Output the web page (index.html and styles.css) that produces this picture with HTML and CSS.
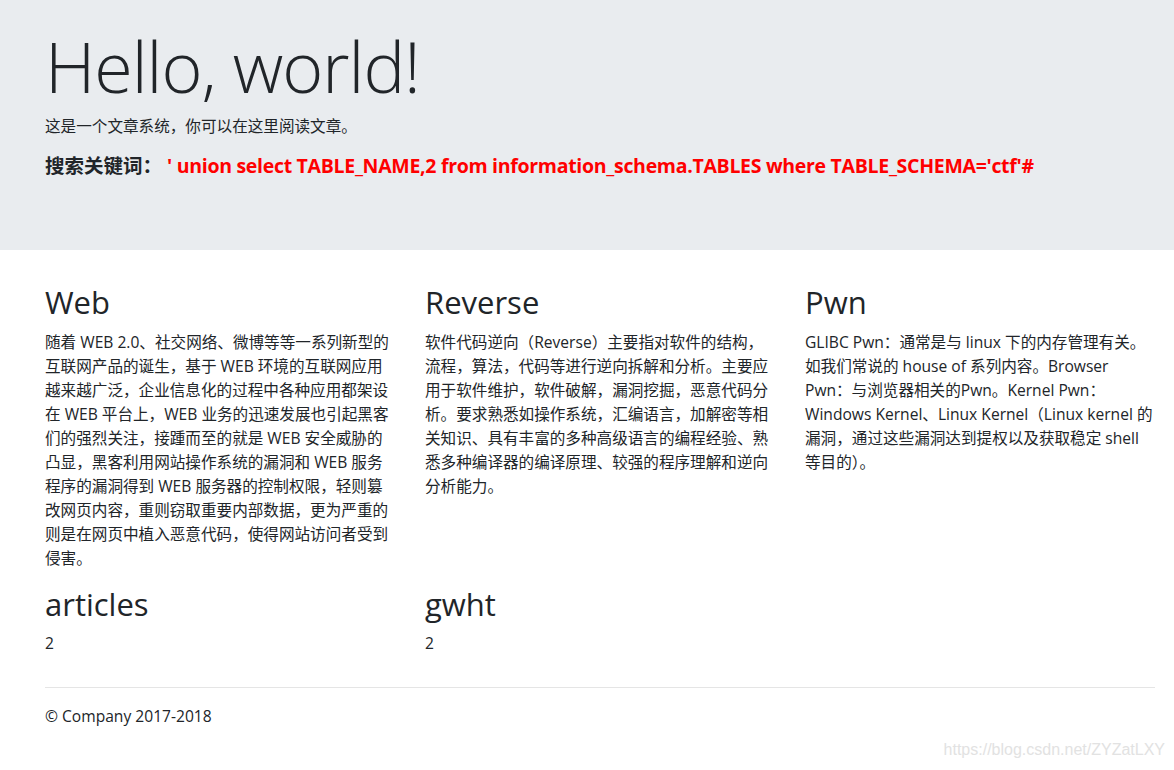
FILE: index.html
```html
<!DOCTYPE html>
<html lang="zh-CN">
<head>
<meta charset="utf-8">
<title>Hello, world!</title>
<link rel="stylesheet" href="styles.css">
</head>
<body>
<main>
  <div class="jumbotron">
    <div class="container">
      <h1 class="display">Hello, world!</h1>
      <p class="lead-text">这是一个文章系统，你可以在这里阅读文章。</p>
      <h5 class="search">搜索关键词：&nbsp;<span class="keyword">' union select TABLE_NAME,2 from information_schema.TABLES where TABLE_SCHEMA='ctf'#</span></h5>
    </div>
  </div>
  <div class="container">
    <div class="row">
      <div class="col">
        <h2>Web</h2>
        <p>随着 WEB 2.0、社交网络、微博等等一系列新型的互联网产品的诞生，基于 WEB 环境的互联网应用越来越广泛，企业信息化的过程中各种应用都架设在 WEB 平台上，WEB 业务的迅速发展也引起黑客们的强烈关注，接踵而至的就是 WEB 安全威胁的凸显，黑客利用网站操作系统的漏洞和 WEB 服务程序的漏洞得到 WEB 服务器的控制权限，轻则篡改网页内容，重则窃取重要内部数据，更为严重的则是在网页中植入恶意代码，使得网站访问者受到侵害。</p>
      </div>
      <div class="col">
        <h2>Reverse</h2>
        <p>软件代码逆向（Reverse）主要指对软件的结构，流程，算法，代码等进行逆向拆解和分析。主要应用于软件维护，软件破解，漏洞挖掘，恶意代码分析。要求熟悉如操作系统，汇编语言，加解密等相关知识、具有丰富的多种高级语言的编程经验、熟悉多种编译器的编译原理、较强的程序理解和逆向分析能力。</p>
      </div>
      <div class="col">
        <h2>Pwn</h2>
        <p>GLIBC Pwn：通常是与 linux 下的内存管理有关。如我们常说的 house of 系列内容。Browser Pwn：与浏览器相关的Pwn。Kernel Pwn：Windows Kernel、Linux Kernel（Linux kernel 的漏洞，通过这些漏洞达到提权以及获取稳定 shell 等目的）。</p>
      </div>
      <div class="col">
        <h2>articles</h2>
        <p>2</p>
      </div>
      <div class="col">
        <h2>gwht</h2>
        <p>2</p>
      </div>
    </div>
    <hr>
  </div>
</main>
<footer class="container">
  <p>© Company 2017-2018</p>
</footer>
<div class="watermark">https://blog.csdn.net/ZYZatLXY</div>
</body>
</html>
```

FILE: styles.css
```css
html, body {
  margin: 0;
  padding: 0;
}
body {
  font-family: "Open Sans", "Noto Sans CJK SC", sans-serif;
  font-size: 15.6px;
  line-height: 24px;
  color: #212529;
  background: #fff;
  position: relative;
  min-height: 770px;
}
.container {
  padding: 0 19px 0 45px;
}
.jumbotron {
  background: #e9ecef;
  padding: 24px 0 65px;
  margin-bottom: 34px;
}
.display {
  font-size: 70px;
  font-weight: 300;
  line-height: 1.2;
  margin: 0 0 6px;
  letter-spacing: -1px;
}
.lead-text {
  margin: 0 0 16px;
}
.search {
  font-size: 19.5px;
  font-weight: 700;
  line-height: 1.2;
  margin: 0 0 8px;
}
.keyword {
  color: #f00;
  letter-spacing: -0.3px;
}
.row {
  display: grid;
  grid-template-columns: repeat(3, 1fr);
  column-gap: 30px;
}
h2 {
  font-size: 31px;
  font-weight: 400;
  line-height: 1.2;
  margin: 0 0 8px;
}
.col p {
  margin: 0 0 16px;
}
hr {
  margin: 16px 0;
  border: 0;
  border-top: 1px solid rgba(0, 0, 0, 0.1);
}
footer p {
  margin: 0;
}
.watermark {
  position: absolute;
  right: 9px;
  bottom: 8px;
  font-family: "Liberation Sans", Arial, sans-serif;
  font-size: 16px;
  color: #e2e2e2;
}
```
